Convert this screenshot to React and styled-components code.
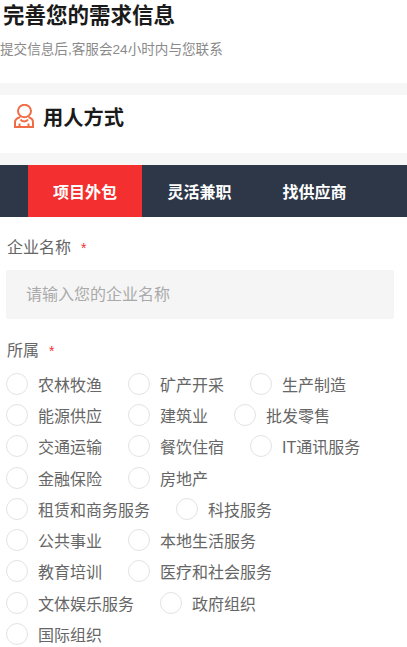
import styled, { createGlobalStyle } from "styled-components";

const GlobalStyle = createGlobalStyle`
  html, body {
    margin: 0;
    padding: 0;
    background: #fff;
  }
  body {
    width: 407px;
    height: 647px;
    overflow: hidden;
    font-family: "Liberation Sans", "Noto Sans CJK SC", sans-serif;
  }
`;

const rows = [
  ["农林牧渔", "矿产开采", "生产制造"],
  ["能源供应", "建筑业", "批发零售"],
  ["交通运输", "餐饮住宿", "IT通讯服务"],
  ["金融保险", "房地产"],
  ["租赁和商务服务", "科技服务"],
  ["公共事业", "本地生活服务"],
  ["教育培训", "医疗和社会服务"],
  ["文体娱乐服务", "政府组织"],
  ["国际组织"],
];

const tabs = ["项目外包", "灵活兼职", "找供应商"];

const UserIcon = () => (
  <svg width="20" height="24" viewBox="0 0 20 24" fill="none" stroke="#ef6c45" strokeWidth="2">
    <ellipse cx="10.5" cy="7" rx="6.500" ry="6.200" />
    <path d="M6.500 13C3 14 1 15.500 1 18V23H19V18C19 15.500 17 14 14.500 13" />
    <path d="M5.500 23V19.500M14.500 23V19.500" />
    <path d="M6.500 15.500C8 18 12.500 18 14 15.500" />
  </svg>
);

const App = () => {
  return (
    <Page>
      <GlobalStyle />
      <Header>
        <Title>完善您的需求信息</Title>
        <Subtitle>提交信息后,客服会24小时内与您联系</Subtitle>
      </Header>
      <Divider />
      <SectionHead>
        <UserIcon />
        <SectionTitle>用人方式</SectionTitle>
      </SectionHead>
      <Divider />
      <TabBar>
        {tabs.map((tab, i) => (
          <Tab key={tab} $active={i === 0}>
            {tab}
          </Tab>
        ))}
      </TabBar>
      <Form>
        <Label>
          企业名称<Star>*</Star>
        </Label>
        <NameInput placeholder="请输入您的企业名称" />
        <Label $second>
          所属<Star>*</Star>
        </Label>
        <RadioList>
          {rows.map((row) => (
            <RadioRow key={row[0]}>
              {row.map((item) => (
                <RadioItem key={item}>
                  <Circle />
                  {item}
                </RadioItem>
              ))}
            </RadioRow>
          ))}
        </RadioList>
      </Form>
    </Page>
  );
};
export default App;

const Page = styled.div`
  width: 407px;
  height: 647px;
  overflow: hidden;
  background: #fff;
`;

const Header = styled.div`
  height: 83px;
  padding-top: 3px;
  box-sizing: border-box;
`;

const Title = styled.h1`
  margin: 0 0 0 3px;
  font-size: 21.5px;
  line-height: 26px;
  font-weight: 700;
  color: #1a1a1a;
`;

const Subtitle = styled.p`
  margin: 14px 0 0;
  font-size: 13.6px;
  line-height: 14px;
  color: #8a8a8a;
`;

const Divider = styled.div`
  height: 12px;
  background: #f6f6f6;
`;

const SectionHead = styled.div`
  height: 58px;
  display: flex;
  align-items: center;
  gap: 9px;
  padding: 0 0 16px 14px;
  box-sizing: border-box;
`;

const SectionTitle = styled.h2`
  margin: 0;
  font-size: 20.3px;
  font-weight: 700;
  color: #1a1a1a;
`;

const TabBar = styled.div`
  height: 52px;
  display: flex;
  padding-left: 28px;
  background: #2d3748;
`;

const Tab = styled.div`
  width: ${(props) => (props.$active ? "114px" : "115px")};
  display: flex;
  align-items: center;
  justify-content: center;
  font-size: 16px;
  font-weight: 700;
  color: #fff;
  background: ${(props) => (props.$active ? "#f32f2f" : "transparent")};
`;

const Form = styled.div`
  padding: 0 13px 0 6px;
`;

const Label = styled.div`
  margin-top: ${(props) => (props.$second ? "21px" : "20px")};
  padding-left: 1px;
  font-size: 16px;
  line-height: 22px;
  color: #666;
`;

const Star = styled.span`
  margin-left: 10px;
  font-size: 14px;
  color: #f32f2f;
`;

const NameInput = styled.input`
  display: block;
  width: 100%;
  height: 49px;
  margin-top: 11px;
  padding: 0 20px;
  box-sizing: border-box;
  border: none;
  border-radius: 2px;
  outline: none;
  background: #f5f5f5;
  font-family: inherit;
  font-size: 16px;

  &::placeholder {
    color: #aaa;
    opacity: 1;
  }
`;

const RadioList = styled.div`
  margin-top: 6px;
`;

const RadioRow = styled.div`
  height: 31.3px;
  display: flex;
  align-items: center;
  gap: 26px;
`;

const RadioItem = styled.label`
  display: flex;
  align-items: center;
  gap: 10px;
  font-size: 16px;
  color: #666;
`;

const Circle = styled.span`
  width: 22px;
  height: 22px;
  box-sizing: border-box;
  border: 1px solid #e3e3e3;
  border-radius: 50%;
  background: #fff;
`;
